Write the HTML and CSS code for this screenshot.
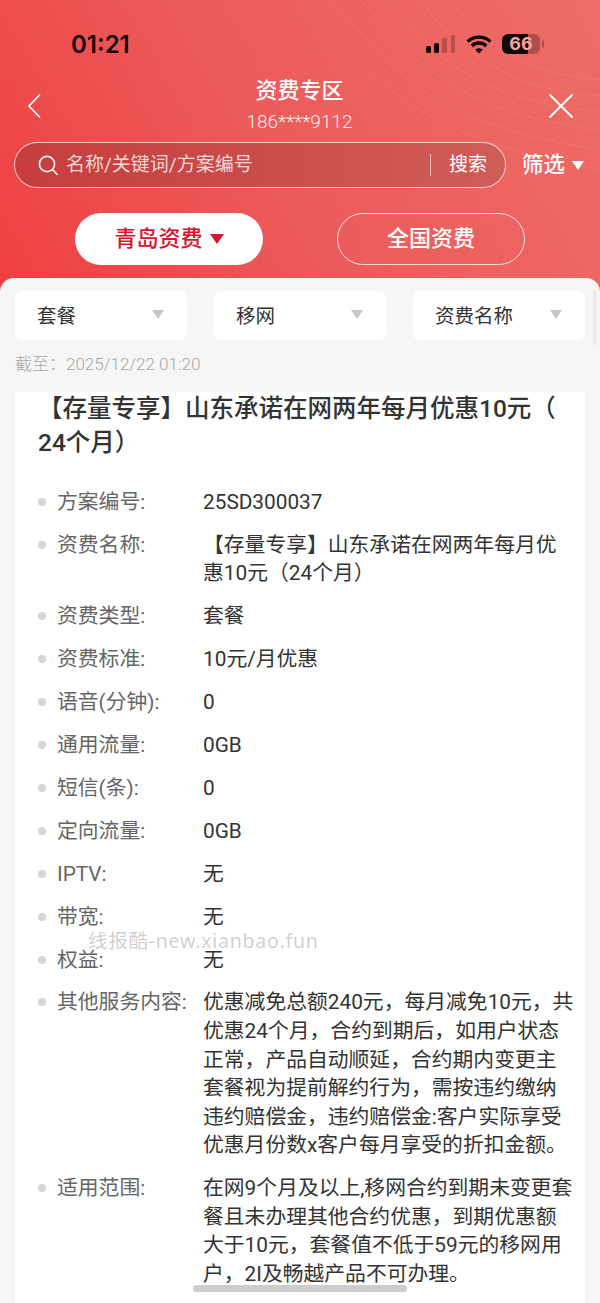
FILE: index.html
```html
<!DOCTYPE html>
<html lang="zh-CN">
<head>
    <meta charset="UTF-8">
    <title>资费专区</title>
    <meta name="viewport" content="width=device-width">
    <link rel="stylesheet" href="styles.css">
</head>
<body>
    <header class="top">
        <svg class="top-waves" width="600" height="290" viewBox="0 0 600 290" fill="none" stroke="#fff" stroke-opacity="0.07">
            <path d="M300 0C370 60 380 130 600 170"/>
            <path d="M330 0C390 60 410 120 600 150"/>
            <path d="M360 0C410 50 440 110 600 130"/>
            <path d="M390 0C430 50 470 100 600 112"/>
            <path d="M420 0C450 40 500 90 600 96"/>
            <path d="M450 0C475 35 520 75 600 80"/>
        </svg>
        <div class="status">
            <span class="status-time">01:21</span>
            <svg class="status-signal" width="31" height="19" viewBox="0 0 31 19">
                <rect x="1" y="11" width="5" height="7" rx="1.5" fill="#120606"/>
                <rect x="9" y="8" width="5" height="10" rx="1.5" fill="#120606"/>
                <rect x="17" y="3" width="5" height="15" rx="1.5" fill="#120606" fill-opacity="0.25"/>
                <rect x="26" y="0" width="4" height="18" rx="1.5" fill="#120606" fill-opacity="0.25"/>
            </svg>
            <svg class="status-wifi" width="26" height="19" viewBox="0 0 26 19" fill="none" stroke="#120606" stroke-width="3.4">
                <path d="M1.6 6.6C7.8 0.6 18.2 0.6 24.4 6.6"/>
                <path d="M5.8 10.9C9.8 7.1 16.2 7.1 20.2 10.9"/>
                <path d="M13 18.6L9.2 14.8C11.4 12.8 14.6 12.8 16.8 14.8Z" fill="#120606" stroke="none"/>
            </svg>
            <div class="status-battery">
                <span class="status-battery-level">66</span>
                <i class="status-battery-nub"></i>
            </div>
        </div>
        <div class="nav">
            <svg class="nav-icon" width="24" height="26" viewBox="0 0 24 26" fill="none" stroke="#fff" stroke-width="1.7">
                <path d="M17 1.5L6 13L17 24.5"/>
            </svg>
            <div class="nav-title">
                <h1>资费专区</h1>
                <p>186****9112</p>
            </div>
            <svg class="nav-icon" width="26" height="26" viewBox="0 0 26 26" fill="none" stroke="#fff" stroke-width="2">
                <path d="M1.5 1.5L24.5 24.5M24.5 1.5L1.5 24.5"/>
            </svg>
        </div>
        <div class="search-row">
            <div class="search">
                <svg width="21" height="21" viewBox="0 0 21 21" fill="none" stroke="#fff" stroke-opacity="0.9" stroke-width="1.7">
                    <circle cx="9" cy="9" r="7.6"/>
                    <path d="M14.6 14.6L19.6 19.8"/>
                </svg>
                <span class="search-hint">名称/关键词/方案编号</span>
                <span class="search-btn">搜索</span>
            </div>
            <div class="filter-btn">筛选<i class="tri tri-white"></i></div>
        </div>
        <div class="tabs">
            <div class="tab tab-on">青岛资费<i class="tri tri-red"></i></div>
            <div class="tab">全国资费</div>
        </div>
    </header>

    <main class="sheet">
        <div class="selects">
            <div class="select"><span>套餐</span><i class="tri tri-grey"></i></div>
            <div class="select"><span>移网</span><i class="tri tri-grey"></i></div>
            <div class="select"><span>资费名称</span><i class="tri tri-grey"></i></div>
        </div>
        <p class="updated">截至：<span>2025/12/22 01:20</span></p>
        <section class="card">
            <h2>【存量专享】山东承诺在网两年每月优惠10元（<br>24个月）</h2>
            <ul class="info">
                <li><span class="info-key">方案编号:</span><span class="info-val">25SD300037</span></li>
                <li><span class="info-key">资费名称:</span><span class="info-val">【存量专享】山东承诺在网两年每月优惠10元（24个月）</span></li>
                <li><span class="info-key">资费类型:</span><span class="info-val">套餐</span></li>
                <li><span class="info-key">资费标准:</span><span class="info-val">10元/月优惠</span></li>
                <li><span class="info-key">语音(分钟):</span><span class="info-val">0</span></li>
                <li><span class="info-key">通用流量:</span><span class="info-val">0GB</span></li>
                <li><span class="info-key">短信(条):</span><span class="info-val">0</span></li>
                <li><span class="info-key">定向流量:</span><span class="info-val">0GB</span></li>
                <li><span class="info-key">IPTV:</span><span class="info-val">无</span></li>
                <li><span class="info-key">带宽:</span><span class="info-val">无</span></li>
                <li><span class="info-key">权益:</span><span class="info-val">无</span></li>
                <li><span class="info-key">其他服务内容:</span><span class="info-val">优惠减免总额240元，每月减免10元，共优惠24个月，合约到期后，如用户状态正常，产品自动顺延，合约期内变更主套餐视为提前解约行为，需按违约缴纳违约赔偿金，违约赔偿金:客户实际享受优惠月份数x客户每月享受的折扣金额。</span></li>
                <li><span class="info-key">适用范围:</span><span class="info-val">在网9个月及以上,移网合约到期未变更套餐且未办理其他合约优惠，到期优惠额大于10元，套餐值不低于59元的移网用户，2I及畅越产品不可办理。</span></li>
            </ul>
        </section>
        <div class="watermark">线报酷-new.xianbao.fun</div>
        <div class="scroll-y"></div>
        <div class="scroll-x"></div>
    </main>
</body>
</html>
```

FILE: styles.css
```css
*,
*::after,
*::before{
    padding: 0;
    margin: 0;
    box-sizing: border-box;
}
html{
    font: normal 20.8px/28.6px Roboto, "Noto Sans CJK SC", sans-serif;
}
body{
    width: 600px;
    height: 1303px;
    overflow: hidden;
    background: #f6f6f7;
    color: #333;
    position: relative;
}
i{
    display: block;
}
ul{
    list-style: none;
}

/* triangles */
.tri{
    width: 0;
    height: 0;
    border-style: solid;
    border-color: transparent;
    border-width: 9px 6.5px 0;
}
.tri-white{
    border-top-color: #fff;
    margin-left: 7px;
}
.tri-red{
    border-top-color: #d9122e;
    border-width: 10px 7px 0;
    margin-left: 7px;
}
.tri-grey{
    border-top-color: #c6c6c6;
    margin-bottom: 2px;
}

/* red header */
.top{
    height: 292px;
    padding-top: 34px;
    background-color: #ee4a4a;
    background-image:
        repeating-linear-gradient(135deg, rgba(255,255,255,0.015) 0 2px, transparent 2px 7px),
        linear-gradient(60deg, #ef3e40 0%, #ec5a5a 45%, #ee6d66 100%);
    color: #fff;
    position: relative;
}
.top-waves{
    position: absolute;
    left: 0;
    top: 0;
}
.status{
    display: flex;
    align-items: center;
    height: 20px;
    padding-left: 71px;
    position: relative;
    color: #120606;
}
.status-time{
    font-family: Inter, sans-serif;
    font-size: 24px;
    font-weight: 600;
    line-height: 20px;
    width: 353px;
    margin-top: 2px;
}
.status-signal{
    margin-left: 1px;
}
.status-wifi{
    margin-left: 10px;
}
.status-battery{
    margin-left: 10px;
    width: 38px;
    height: 20px;
    border-radius: 6px;
    background: linear-gradient(90deg, #120606 68%, rgba(18,6,6,0.28) 68%);
    color: #f3a5a0;
    font-family: Inter, sans-serif;
    font-size: 18px;
    font-weight: 700;
    line-height: 20px;
    text-align: center;
    position: relative;
}
.status-battery-nub{
    position: absolute;
    right: -4px;
    top: 6px;
    width: 2px;
    height: 8px;
    border-radius: 0 2px 2px 0;
    background: rgba(18,6,6,0.3);
}
.nav{
    display: flex;
    justify-content: space-between;
    align-items: center;
    padding: 0 26px 0 23px;
    margin-top: 22px;
    position: relative;
}
.nav-title{
    text-align: center;
    margin-left: 4px;
}
.nav-title h1{
    font-size: 22px;
    font-weight: 500;
    line-height: 30px;
}
.nav-title p{
    font-size: 19px;
    line-height: 26px;
    margin-top: 3px;
    font-weight: 300;
    opacity: 0.9;
}
.search-row{
    display: flex;
    align-items: center;
    padding-left: 14px;
    margin-top: 7px;
    position: relative;
}
.search{
    display: flex;
    align-items: center;
    width: 492px;
    height: 46px;
    padding: 0 18px 0 23px;
    border: 1px solid rgba(255,255,255,0.7);
    border-radius: 23px;
    background: linear-gradient(90deg, #c63d3d, #cf5d58);
}
.search-hint{
    flex: 1;
    margin: 1px 0 0 7px;
    font-size: 19px;
    color: rgba(255,255,255,0.8);
}
.search-btn{
    font-size: 19px;
    line-height: 22px;
    padding-left: 18px;
    border-left: 1px solid rgba(255,255,255,0.6);
}
.filter-btn{
    display: flex;
    align-items: center;
    margin-left: 16px;
    font-size: 21.5px;
    font-weight: 500;
}
.tabs{
    display: flex;
    justify-content: center;
    gap: 74px;
    margin-top: 25px;
    position: relative;
}
.tab{
    display: flex;
    align-items: center;
    justify-content: center;
    width: 188px;
    height: 52px;
    border: 1px solid rgba(255,255,255,0.8);
    border-radius: 26px;
    font-size: 22px;
    font-weight: 500;
}
.tab-on{
    background: #fff;
    color: #d9122e;
}

/* white sheet */
.sheet{
    position: absolute;
    left: 0;
    right: 0;
    top: 278px;
    bottom: 0;
    padding: 13px 15px 0;
    border-radius: 14px 14px 0 0;
    background: #f6f6f7;
}
.selects{
    display: flex;
    justify-content: space-between;
}
.select{
    display: flex;
    align-items: center;
    justify-content: space-between;
    width: 172px;
    height: 49px;
    padding: 0 23px 0 22px;
    border-radius: 7px;
    background: #fff;
    font-size: 19.5px;
}
.select span{
    margin-top: 3px;
}
.updated{
    margin-top: 10px;
    font-size: 17px;
    line-height: 28px;
    color: #a6a6a6;
    font-weight: 300;
}
.card{
    margin-top: 14px;
    height: 911px;
    padding: 0 10px 0 23px;
    background: #fff;
    overflow: hidden;
}
.card h2{
    margin-bottom: 28px;
    font-size: 24.5px;
    font-weight: 500;
    line-height: 34px;
}
.info li{
    display: flex;
    margin-bottom: 14.3px;
    position: relative;
}
.info li::before{
    content: "";
    position: absolute;
    left: 0;
    top: 10px;
    width: 8px;
    height: 8px;
    border-radius: 50%;
    background: #d6d6d6;
}
.info-key{
    flex: 0 0 165px;
    padding-left: 19px;
    color: #666;
}
.info-val{
    flex: 1;
}
.watermark{
    position: absolute;
    left: 88px;
    top: 653px;
    font-family: "Noto Sans", "Noto Sans CJK SC", sans-serif;
    font-size: 19.5px;
    line-height: 20px;
    letter-spacing: 0.75px;
    color: rgba(0,0,0,0.2);
    white-space: nowrap;
}
.scroll-y{
    position: absolute;
    right: 3px;
    top: 12px;
    width: 4px;
    height: 56px;
    border-radius: 2px;
    background: #ececec;
}
.scroll-x{
    position: absolute;
    left: 193px;
    bottom: 11px;
    width: 214px;
    height: 7px;
    border-radius: 4px;
    background: #cdcdcd;
}
```
